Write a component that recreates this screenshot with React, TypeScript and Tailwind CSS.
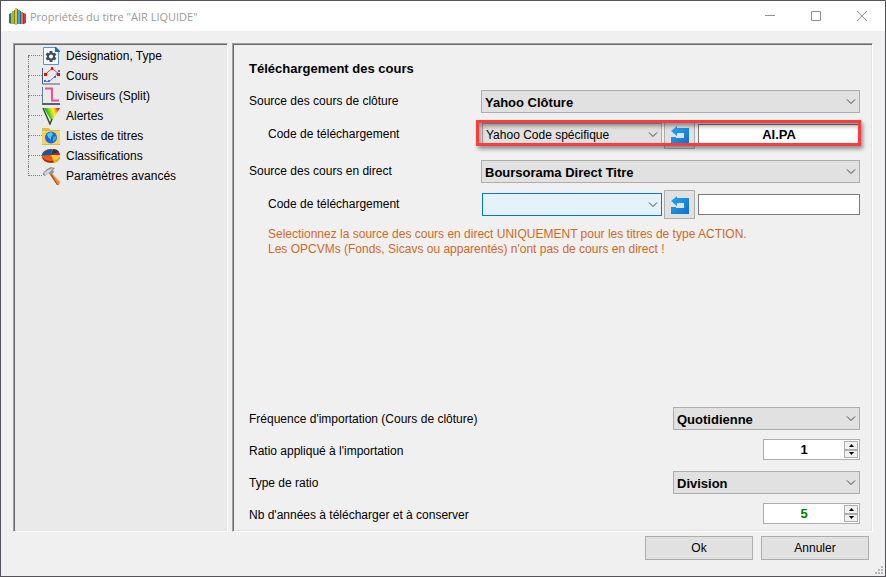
import type { ReactNode } from "react";
import clsx from "clsx";

type TreeItem = {
  label: string;
  icon: ReactNode;
};

type PickerProps = {
  id: string;
  label: string;
  options: string[];
  className?: string;
  variant?: "bold" | "plain" | "focused";
};

const treeItems: TreeItem[] = [
  { label: "Désignation, Type", icon: <SheetIcon /> },
  { label: "Cours", icon: <CurveIcon /> },
  { label: "Diviseurs (Split)", icon: <SplitIcon /> },
  { label: "Alertes", icon: <AlertIcon /> },
  { label: "Listes de titres", icon: <FolderIcon /> },
  { label: "Classifications", icon: <PieIcon /> },
  { label: "Paramètres avancés", icon: <HammerIcon /> },
];

const sunken =
  "border border-t-[#a0a0a0] border-r-white border-b-white border-l-[#a0a0a0] shadow-[inset_1px_1px_#696969,inset_-1px_-1px_#e3e3e3]";

function AppIcon() {
  return (
    <svg width="17" height="17" viewBox="0 0 17 17" aria-hidden="true">
      <path d="M0 6l2-1v11l-2-1z" fill="#2e7d5a" />
      <path d="M2 5h1v11H2z" fill="#7cc0a0" />
      <path d="M3 3h2v13H3z" fill="#a8b83a" />
      <path d="M5 2h1v14H5z" fill="#7b8a20" />
      <path d="M6 0h2v17H6z" fill="#f0bc2c" />
      <path d="M8 1h1v15H8z" fill="#8a6a18" />
      <path d="M9 2h2v14H9z" fill="#38a8dc" />
      <path d="M11 3h1v13h-1z" fill="#1c6c9c" />
      <path d="M12 4h2v12h-2z" fill="#f07030" />
      <path d="M14 5h1v11h-1z" fill="#a83818" />
      <path d="M15 5l2 1v9l-2 1z" fill="#c83858" />
    </svg>
  );
}

function SheetIcon() {
  return (
    <svg width="18" height="18" viewBox="0 0 18 18" aria-hidden="true">
      <path d="M1.500.5h12l3 3v14h-15z" fill="#f7fbff" stroke="#5a94d0" />
      <path d="M13 0h1l4 4v1h-5z" fill="#1668c0" />
      <g stroke="#42505a" strokeWidth="3">
        <path d="M9 4v11M4.300 6.800l9.400 5.400M4.300 12.200l9.400-5.400" />
      </g>
      <circle cx="9" cy="9.500" r="4" fill="#42505a" />
      <circle cx="9" cy="9.500" r="2" fill="#fff" />
    </svg>
  );
}

function CurveIcon() {
  return (
    <svg width="18" height="18" viewBox="0 0 18 18" aria-hidden="true">
      <path d="M.5 1v16H18" fill="none" stroke="#48607c" />
      <path d="M3 14.500h4l6-5 4-6" fill="none" stroke="#4a86ee" />
      <path d="M3 7.500l7-6 7 5.500" fill="none" stroke="#ff4040" />
      <path d="M2 13h2v2H2zM6 13h2v2H6zM12 9h2v2h-2zM16 3h2v2h-2z" fill="#3a78e8" />
      <path d="M2 6h3v3H2zM9 0h2v3H9zM15 6h3v3h-3z" fill="#f00" />
    </svg>
  );
}

function SplitIcon() {
  return (
    <svg width="18" height="18" viewBox="0 0 18 18" aria-hidden="true">
      <path d="M.5 0v16.500" stroke="#66788e" />
      <path d="M0 17h18" stroke="#52627a" strokeWidth="2" />
      <path d="M3 1.500h7v12h7" fill="none" stroke="#f0508c" strokeWidth="2" />
    </svg>
  );
}

function AlertIcon() {
  return (
    <svg width="18" height="18" viewBox="0 0 18 18" aria-hidden="true">
      <defs>
        <linearGradient id="alert" x1="0" y1="0.3" x2="1" y2="0">
          <stop offset="0.15" stopColor="#16b416" />
          <stop offset="0.35" stopColor="#8be01c" />
          <stop offset="0.55" stopColor="#fff01c" />
          <stop offset="0.72" stopColor="#ff9a18" />
          <stop offset="0.88" stopColor="#e41c24" />
        </linearGradient>
      </defs>
      <path d="M2 1h16L9.500 14z" fill="url(#alert)" />
      <path d="M1 1l7 16L10 12" fill="none" stroke="#3a4a30" strokeWidth="1.500" />
    </svg>
  );
}

function FolderIcon() {
  return (
    <svg width="18" height="18" viewBox="0 0 18 18" aria-hidden="true">
      <path d="M0 1h7l2 2h9v15H0z" fill="#e4b83e" />
      <path d="M0 4h18v13H0z" fill="#f3d268" />
      <circle cx="9" cy="10.500" r="6" fill="#1c66e4" />
      <path d="M5 7l4-2 2 2-2 3 0 3-3-3z" fill="#4ccfe0" />
      <path d="M11 10l3-1v3l-3 3z" fill="#2cb8b0" />
    </svg>
  );
}

function PieIcon() {
  return (
    <svg width="18" height="14" viewBox="0 0 18 14" aria-hidden="true">
      <ellipse cx="9" cy="8" rx="9" ry="6" fill="#a83208" />
      <ellipse cx="9" cy="6" rx="9" ry="6" fill="#f05a14" />
      <path d="M9 6L0 6.500C0 3 4 0 10 0z" fill="#1458a0" />
      <path d="M9 6l2-6c3 0 5 1 6 3z" fill="#28384c" />
      <path d="M9 6l8-3 1 3z" fill="#c01830" />
      <path d="M9 6h9v2c0 3-3 5-6 6z" fill="#e0a818" />
      <path d="M9 6h9c0 3-3 5-6 5.500z" fill="#f8cc38" />
    </svg>
  );
}

function HammerIcon() {
  return (
    <svg width="18" height="18" viewBox="0 0 18 18" aria-hidden="true">
      <path d="M7 6l2-1 9 10-1 3h-2z" fill="#e88a3c" />
      <path d="M7 6l8 12h1L9 6z" fill="#a8501c" />
      <path d="M9 5l8 9" stroke="#ffc48c" />
      <path d="M1 8V6l4-4 4-2 4 1-2 2 1 2-3 3-3-2-3 3z" fill="#8c9298" />
      <path d="M2 6l4-3 5-2-3 4-2 1-3 2z" fill="#d4d8dc" />
    </svg>
  );
}

function UndoIcon() {
  return (
    <svg width="18" height="18" viewBox="0 0 18 18" aria-hidden="true">
      <defs>
        <linearGradient id="undo" x1="0" y1="0" x2="1" y2="1">
          <stop offset="0" stopColor="#22a8f8" />
          <stop offset="1" stopColor="#1070c8" />
        </linearGradient>
      </defs>
      <path d="M0 5l6-5v2h12v16H0v-7h5v1h8V7H6v3z" fill="url(#undo)" />
    </svg>
  );
}

function Tree() {
  return (
    <nav className={clsx("w-[215px] shrink-0 bg-[#eaeaea] pt-[2px] pl-[14px]", sunken)}>
      <ul>
        {treeItems.map((item, index) => (
          <li key={item.label} className="flex h-5 items-center">
            <span className="h-5 w-[14px]">
              <span
                className={clsx(
                  "block h-[10px] border-b border-dotted border-[#808080]",
                  index > 0 && "border-l",
                )}
              />
              <span
                className={clsx(
                  "block h-[10px] border-dotted border-[#808080]",
                  index < treeItems.length - 1 && "border-l",
                )}
              />
            </span>
            <button type="button" className="flex items-center gap-[6px]">
              <span className="flex h-5 w-[18px] items-center">{item.icon}</span>
              {item.label}
            </button>
          </li>
        ))}
      </ul>
    </nav>
  );
}

function Picker({ id, label, options, className, variant = "bold" }: PickerProps) {
  return (
    <div className={clsx("relative h-[23px]", className)}>
      <select
        id={id}
        aria-label={label}
        className={clsx(
          "block h-full w-full appearance-none border pt-[2px] pr-5 pl-[3px]",
          variant === "bold" && "border-[#adadad] bg-[#e1e1e1] text-[13px] font-bold",
          variant === "plain" && "border-[#adadad] bg-[#e1e1e1]",
          variant === "focused" && "border-[#0078d7] bg-[#e5f1fb]",
        )}
      >
        {options.map((option) => (
          <option key={option}>{option}</option>
        ))}
      </select>
      <svg
        className="pointer-events-none absolute top-[9px] right-1"
        width="10"
        height="6"
        viewBox="0 0 10 6"
        aria-hidden="true"
      >
        <path d="M1 .5l4 4 4-4" fill="none" stroke="#404040" />
      </svg>
    </div>
  );
}

function CodeRow({ id, source, code, focused }: { id: string; source: string; code: string; focused?: boolean }) {
  return (
    <div className="flex h-[29px] items-center">
      <label htmlFor={id} className="w-[233px] shrink-0 pl-[19px]">
        Code de téléchargement
      </label>
      <div className="relative flex min-w-0 flex-1 items-center">
        <Picker
          id={id}
          label="Code de téléchargement"
          options={[source]}
          variant={focused ? "focused" : "plain"}
          className="w-[180px] shrink-0"
        />
        <button
          type="button"
          aria-label="Réinitialiser le code"
          className="ml-[2px] flex h-[29px] w-[31px] shrink-0 items-center justify-center border border-[#adadad] bg-[#e1e1e1]"
        >
          <UndoIcon />
        </button>
        <input
          type="text"
          aria-label="Code"
          defaultValue={code}
          className="ml-[3px] h-[21px] min-w-0 flex-1 border border-[#7a7a7a] bg-white text-center text-[13px] font-bold"
        />
        {!focused && (
          <div className="pointer-events-none absolute top-0 -right-px -left-[6px] h-[26px] border-[3px] border-[#f93c3c] shadow-[2px_3px_4px_rgba(0,0,0,0.4),inset_2px_3px_4px_rgba(0,0,0,0.4)]" />
        )}
      </div>
    </div>
  );
}

function SourceRow({ id, label, value }: { id: string; label: string; value: string }) {
  return (
    <div className="flex items-center">
      <label htmlFor={id} className="w-[232px] shrink-0">
        {label}
      </label>
      <Picker id={id} label={label} options={[value]} className="min-w-0 flex-1" />
    </div>
  );
}

function Spinner({ id, value, className }: { id: string; value: string; className?: string }) {
  return (
    <div className="flex h-[21px] w-[97px] border border-[#adadad] bg-white">
      <input
        id={id}
        type="text"
        inputMode="numeric"
        defaultValue={value}
        className={clsx("min-w-0 flex-1 text-center text-[13px] font-bold", className)}
      />
      <div className="mr-px flex w-[14px] flex-col py-px">
        <button
          type="button"
          aria-label="Augmenter"
          className="flex flex-1 items-center justify-center border border-[#adadad] bg-[#f0f0f0]"
        >
          <svg width="5" height="3" viewBox="0 0 5 3" aria-hidden="true">
            <path d="M0 3h5L2.500 0z" />
          </svg>
        </button>
        <button
          type="button"
          aria-label="Diminuer"
          className="flex flex-1 items-center justify-center border border-[#adadad] bg-[#f0f0f0]"
        >
          <svg width="5" height="3" viewBox="0 0 5 3" aria-hidden="true">
            <path d="M0 0h5L2.500 3z" />
          </svg>
        </button>
      </div>
    </div>
  );
}

function SettingRow({ id, label, children }: { id: string; label: string; children: ReactNode }) {
  return (
    <div className="flex h-[23px] items-start justify-between">
      <label htmlFor={id} className="leading-6">
        {label}
      </label>
      {children}
    </div>
  );
}

export default function App() {
  return (
    <div className="flex min-h-screen flex-col border border-[#55525c] bg-[#f0f0f0] font-['Liberation_Sans',Arial,sans-serif] text-[12px] leading-[15px] text-black">
      <header className="flex h-[30px] shrink-0 items-center bg-white pl-2 font-['Open_Sans',sans-serif] text-[11px] text-[#999999]">
        <AppIcon />
        <h1 className="ml-1 flex-1">Propriétés du titre "AIR LIQUIDE"</h1>
        <div className="flex">
          <button type="button" aria-label="Réduire" className="flex h-[30px] w-[46px] items-center justify-center">
            <svg width="10" height="10" viewBox="0 0 10 10" stroke="#909090" aria-hidden="true">
              <path d="M0 4.500h10" />
            </svg>
          </button>
          <button type="button" aria-label="Agrandir" className="flex h-[30px] w-[46px] items-center justify-center">
            <svg width="10" height="10" viewBox="0 0 10 10" fill="none" stroke="#909090" aria-hidden="true">
              <path d="M.5.5h9v9h-9z" />
            </svg>
          </button>
          <button type="button" aria-label="Fermer" className="flex h-[30px] w-[46px] items-center justify-center">
            <svg width="10" height="10" viewBox="0 0 10 10" stroke="#909090" aria-hidden="true">
              <path d="M0 0l10 10M10 0L0 10" />
            </svg>
          </button>
        </div>
      </header>

      <div className="flex flex-1 gap-1 px-3 pt-3">
        <Tree />

        <main className={clsx("flex min-w-0 flex-1 flex-col pt-[17px] pr-3 pb-[5px] pl-4", sunken)}>
          <h2 className="text-[13px] leading-4 font-bold">Téléchargement des cours</h2>

          <section className="mt-[13px] flex flex-col gap-[11px]">
            <div className="flex flex-col gap-[7px]">
              <SourceRow id="closing" label="Source des cours de clôture" value="Yahoo Clôture" />
              <CodeRow id="closing-code" source="Yahoo Code spécifique" code="AI.PA" />
            </div>
            <div className="flex flex-col gap-[7px]">
              <SourceRow id="live" label="Source des cours en direct" value="Boursorama Direct Titre" />
              <CodeRow id="live-code" source="" code="" focused />
            </div>
          </section>

          <p className="mt-2 pl-[19px] text-[#d2691e]">
            Selectionnez la source des cours en direct UNIQUEMENT pour les titres de type ACTION.
            <br />
            Les OPCVMs (Fonds, Sicavs ou apparentés) n'ont pas de cours en direct !
          </p>

          <section className="mt-auto flex flex-col gap-[9px]">
            <SettingRow id="frequency" label="Fréquence d'importation (Cours de clôture)">
              <Picker
                id="frequency"
                label="Fréquence d'importation"
                options={["Quotidienne"]}
                className="w-[187px]"
              />
            </SettingRow>
            <SettingRow id="ratio" label="Ratio appliqué à l'importation">
              <Spinner id="ratio" value="1" />
            </SettingRow>
            <SettingRow id="ratio-type" label="Type de ratio">
              <Picker id="ratio-type" label="Type de ratio" options={["Division"]} className="w-[187px]" />
            </SettingRow>
            <SettingRow id="years" label="Nb d'années à télécharger et à conserver">
              <Spinner id="years" value="5" className="text-[#008000]" />
            </SettingRow>
          </section>
        </main>
      </div>

      <footer className="relative flex shrink-0 justify-end gap-2 pt-1 pr-4 pb-4">
        <button type="button" className="h-6 w-[108px] border border-[#adadad] bg-[#e1e1e1]">
          Ok
        </button>
        <button type="button" className="h-6 w-[108px] border border-[#adadad] bg-[#e1e1e1]">
          Annuler
        </button>
        <svg
          className="absolute right-[2px] bottom-[2px]"
          width="8"
          height="8"
          viewBox="0 0 8 8"
          fill="#b8b8b8"
          aria-hidden="true"
        >
          <path d="M6 0h2v2H6zM3 3h2v2H3zM6 3h2v2H6zM0 6h2v2H0zM3 6h2v2H3zM6 6h2v2H6z" />
        </svg>
      </footer>
    </div>
  );
}
